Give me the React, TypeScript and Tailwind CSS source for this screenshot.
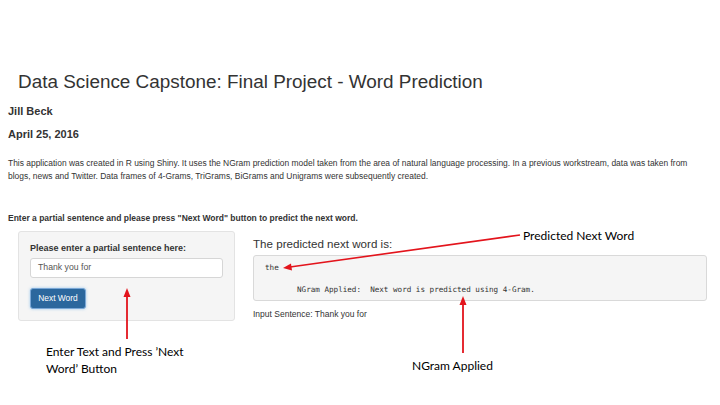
import React from 'react';

const sans = "font-['Liberation_Sans',Arial,sans-serif]";
const mono = "font-['DejaVu_Sans_Mono','Liberation_Mono',monospace]";
const note = "font-['Lato','Open_Sans',sans-serif]";

const App: React.FC = () => {
  return (
    <div className={`relative w-[720px] h-[405px] bg-white overflow-hidden text-[#333] ${sans}`}>
      <div className="px-2 pt-[70px]">
        <h1 className="ml-[10px] text-[18.9px] leading-[24px] font-normal text-[#333]">
          Data Science Capstone: Final Project - Word Prediction
        </h1>
        <div className="mt-[10px] text-[11px] leading-[14px] font-bold">Jill Beck</div>
        <div className="mt-[9px] text-[11px] leading-[14px] font-bold">April 25, 2016</div>

        <p className="mt-[16px] max-w-[690px] text-[8.45px] leading-[13px]">
          This application was created in R using Shiny. It uses the NGram prediction model taken from the area of natural language processing. In a previous workstream, data was taken from blogs, news and Twitter. Data frames of 4-Grams, TriGrams, BiGrams and Unigrams were subsequently created.
        </p>

        <p className="mt-[29px] text-[8.5px] leading-[12px] font-bold">
          Enter a partial sentence and please press "Next Word" button to predict the next word.
        </p>

        <div className="mt-[7px] flex items-start">
          {/* sidebar panel */}
          <div className="ml-[10px] w-[217px] h-[90px] bg-[#f5f5f5] border border-[#e3e3e3] rounded-[3px] px-[11px] pt-[11px]">
            <div className="text-[9px] leading-[11px] font-bold">Please enter a partial sentence here:</div>
            <div className="mt-[4px] h-[20px] bg-white border border-[#d6d6d6] rounded-[3px] flex items-center px-[7px] text-[8.7px] text-[#555]">
              Thank you for
            </div>
            <button className="mt-[10px] w-[56px] h-[21px] bg-[#2b679d] border border-[#7aa7d6] rounded-[3px] text-white text-[8.4px] shadow-[0_0_3px_rgba(102,175,233,0.6)]">
              Next Word
            </button>
          </div>

          {/* main output */}
          <div className="ml-[18px] w-[454px] mt-[5px]">
            <div className="text-[11.6px] leading-[15px]">The predicted next word is:</div>
            <div className={`mt-[4px] h-[46px] bg-[#f5f5f5] border border-[#d9d9d9] rounded-[3px] px-[11px] pt-[6px] text-[7.6px] leading-[11px] text-[#333] whitespace-pre ${mono}`}>
              <div>the</div>
              <div className="mt-[11px]">{'       NGram Applied:  Next word is predicted using 4-Gram.'}</div>
            </div>
            <div className="mt-[8px] text-[8.5px] leading-[11px]">Input Sentence: Thank you for</div>
          </div>
        </div>
      </div>

      {/* annotation overlay */}
      <svg className="absolute inset-0 pointer-events-none" width="720" height="405" viewBox="0 0 720 405">
        <line x1="520" y1="235" x2="290" y2="267" stroke="#e3141c" strokeWidth="1.6" />
        <polygon points="283,268 291,263.5 292,270.5" fill="#e3141c" />
        <line x1="127" y1="296" x2="127" y2="339" stroke="#e3141c" strokeWidth="1.8" />
        <polygon points="127,288 123.5,297 130.5,297" fill="#e3141c" />
        <line x1="463" y1="304" x2="463" y2="353" stroke="#e3141c" strokeWidth="1.8" />
        <polygon points="463,296 459.5,305 466.5,305" fill="#e3141c" />
      </svg>
      <div className={`absolute left-[523px] top-[228px] text-[12px] leading-[16px] text-black ${note}`}>
        Predicted Next Word
      </div>
      <div className={`absolute left-[46px] top-[343px] w-[160px] text-[12px] leading-[17px] text-black ${note}`}>
        Enter Text and Press ’Next Word’ Button
      </div>
      <div className={`absolute left-[412px] top-[358px] text-[12px] leading-[16px] text-black ${note}`}>
        NGram Applied
      </div>
    </div>
  );
};

export default App;
